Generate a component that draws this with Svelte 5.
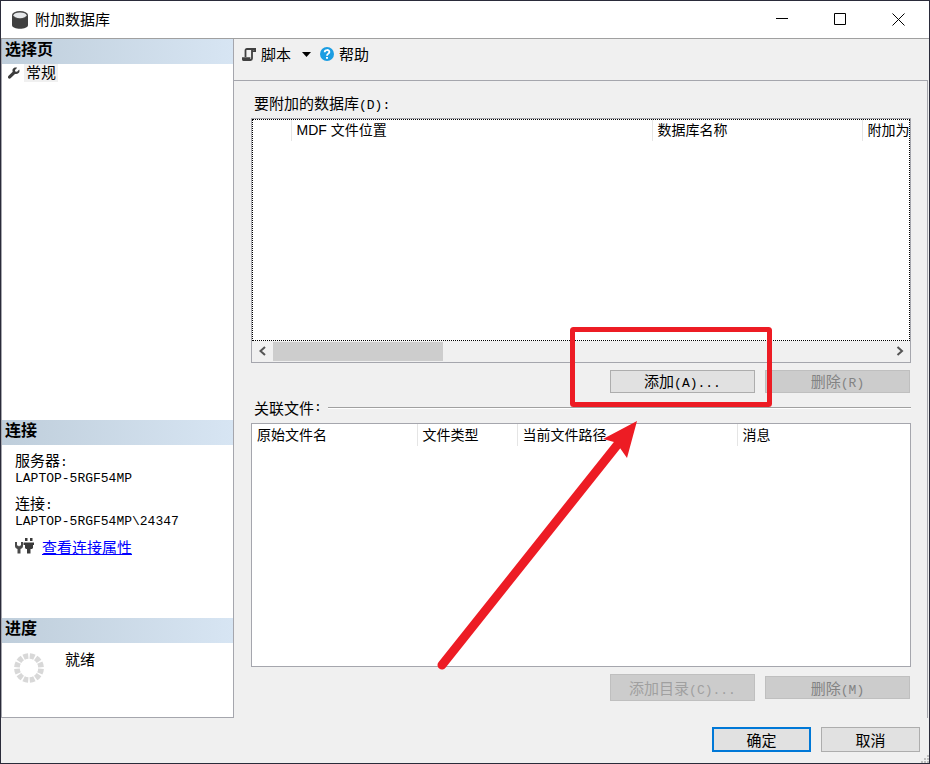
<script lang="ts">
    type Column = {
        title: string;
        width: number;
    };

    const databaseColumns: Column[] = [
        { title: '', width: 39 },
        { title: 'MDF 文件位置', width: 361 },
        { title: '数据库名称', width: 210 },
        { title: '附加为', width: 111 }
    ];

    const fileColumns: Column[] = [
        { title: '原始文件名', width: 165 },
        { title: '文件类型', width: 100 },
        { title: '当前文件路径', width: 220 }
    ];

    const segments = Array.from({ length: 12 }, (_, i) => i * 30 + 15);
</script>

<div class="window" lang="zh-CN">
    <header class="titlebar">
        <svg class="app-icon" width="16" height="18" viewBox="0 0 16 18">
            <path d="M0 4v10c0 5 16 5 16 0V4z" fill="#3f3f3f" />
            <ellipse cx="8" cy="4" rx="8" ry="4" fill="#4a4a4a" />
            <ellipse cx="8" cy="4.3" rx="6.5" ry="2.9" fill="#e6e8ea" />
        </svg>
        <h1>附加数据库</h1>
        <button class="caption" aria-label="最小化">
            <svg width="13" height="13" viewBox="0 0 13 13"><path d="M0 5.5h12" /></svg>
        </button>
        <button class="caption" aria-label="最大化">
            <svg width="13" height="13" viewBox="0 0 13 13"><path d="M.5.5h11v11H.5z" /></svg>
        </button>
        <button class="caption" aria-label="关闭">
            <svg width="13" height="13" viewBox="0 0 13 13"><path d="M.5.5l12 12M12.5.5l-12 12" /></svg>
        </button>
    </header>

    <div class="body">
        <aside>
            <h2>选择页</h2>
            <ul class="pages">
                <li>
                    <svg width="12" height="12" viewBox="0 0 12 12">
                        <path
                            d="M11.2 2.6 9 4.8 7.2 4.6 7 3 9.2.8C7.5 0 5.5.6 4.8 2c-.5 1-.4 1.8-.1 2.7L.6 8.8c-.8.8-.8 1.7-.2 2.4.7.6 1.6.6 2.4-.2L7 6.9c1.1.4 2.6.2 3.6-.8s1.1-2.4.6-3.5z"
                            fill="#3c3c3c"
                        />
                    </svg>
                    <button class="page">常规</button>
                </li>
            </ul>

            <h2>连接</h2>
            <div class="connection">
                <dl>
                    <dt>服务器<span class="latin">:</span></dt>
                    <dd><span class="latin">LAPTOP-5RGF54MP</span></dd>
                    <dt>连接<span class="latin">:</span></dt>
                    <dd><span class="latin">LAPTOP-5RGF54MP\24347</span></dd>
                </dl>
                <div class="properties">
                    <svg width="19" height="17" viewBox="0 0 19 17">
                        <path
                            d="M0 4v4c0 1.5 1 2.5 2.5 3v4.5h3V11C7 10.5 8 9.5 8 8V4H6v3.5H5l-1 1-1-1H2V4z"
                            fill="#4a4a4a"
                        />
                        <path
                            d="M10 0h2.5v3H10zM15 0h2.5v3H15zM8.5 4.5H19V7h-1v3l-1 1h-1.500v4.500H12V11h-1l-1-1V7H8.500z"
                            fill="#3a3a3a"
                        />
                    </svg>
                    <a href="#properties">查看连接属性</a>
                </div>
            </div>

            <h2>进度</h2>
            <div class="progress">
                <svg width="30" height="30" viewBox="-15 -15 30 30">
                    {#each segments as angle}
                        <path
                            d="M-2.9-14.6Q0-15.3 2.9-14.6L1.9-9Q0-9.5-1.9-9z"
                            fill="#d8d8d8"
                            transform="rotate({angle})"
                        />
                    {/each}
                </svg>
                <span>就绪</span>
            </div>
        </aside>

        <main>
            <div class="toolbar">
                <button class="tool">
                    <svg width="14" height="13" viewBox="0 0 14 13">
                        <path
                            d="M3.5 9V2.5Q3.5 1 5 1h8.2v2.2H10.800M10 1.500V10.500Q10 12 8.500 12H1.500Q.8 12 .8 10.200H7.500V12"
                            fill="none"
                            stroke="#404040"
                            stroke-width="1.8"
                        />
                    </svg>
                    脚本
                    <svg class="arrow" width="9" height="5" viewBox="0 0 9 5"><path d="M0 0h9L4.5 5z" /></svg>
                </button>
                <button class="tool">
                    <svg width="14" height="14" viewBox="0 0 14 14">
                        <circle cx="7" cy="7" r="7" fill="#1b9de2" />
                        <path
                            d="M4.7 5.3c0-3 4.7-3 4.7-.2C9.4 6.6 7 6.8 7 8.7"
                            fill="none"
                            stroke="#fff"
                            stroke-width="1.8"
                        />
                        <path d="M6 10h2v1.8H6z" fill="#fff" />
                    </svg>
                    帮助
                </button>
            </div>

            <div class="panel">
                <div class="label" id="databases">要附加的数据库<span class="latin">(D):</span></div>
                <div class="grid">
                    <div class="view focused">
                        <table aria-labelledby="databases">
                            <colgroup>
                                {#each databaseColumns as column}
                                    <col style="width: {column.width}px" />
                                {/each}
                            </colgroup>
                            <thead>
                                <tr>
                                    {#each databaseColumns as column}
                                        <th>{column.title}</th>
                                    {/each}
                                </tr>
                            </thead>
                        </table>
                    </div>
                    <div class="scrollbar">
                        <button aria-label="向左滚动">
                            <svg width="8" height="10" viewBox="0 0 8 10"><path d="M6 1 1.5 5 6 9" /></svg>
                        </button>
                        <div class="track"><div class="thumb"></div></div>
                        <button aria-label="向右滚动">
                            <svg width="8" height="10" viewBox="0 0 8 10"><path d="M1.5 1 6 5 1.5 9" /></svg>
                        </button>
                    </div>
                </div>
                <div class="actions">
                    <div class="marked">
                        <button class="push">添加<span class="latin">(A)...</span></button>
                        <!-- red frame and arrow pointing at the add button -->
                        <svg class="mark" width="342" height="350" viewBox="0 0 342 350">
                            <rect x="142.5" y="9.5" width="197" height="75" rx="1" />
                            <path class="shaft" d="M12 345 188 124" />
                            <path class="head" d="M207 101 173 119 184 122 190 128 197 138z" />
                        </svg>
                    </div>
                    <button class="push" disabled>删除<span class="latin">(R)</span></button>
                </div>

                <div class="label divider" id="files">关联文件<span class="latin">:</span></div>
                <div class="grid">
                    <div class="view">
                        <table class="fluid" aria-labelledby="files">
                            <colgroup>
                                {#each fileColumns as column}
                                    <col style="width: {column.width}px" />
                                {/each}
                                <col />
                            </colgroup>
                            <thead>
                                <tr>
                                    {#each fileColumns as column}
                                        <th>{column.title}</th>
                                    {/each}
                                    <th>消息</th>
                                </tr>
                            </thead>
                        </table>
                    </div>
                </div>
                <div class="actions">
                    <button class="push tall" disabled>添加目录<span class="latin">(C)...</span></button>
                    <button class="push" disabled>删除<span class="latin">(M)</span></button>
                </div>
            </div>
        </main>
    </div>

    <footer>
        <button class="push dialog default">确定</button>
        <button class="push dialog">取消</button>
        <svg class="grip" width="8" height="8" viewBox="0 0 8 8">
            <path d="M6 0h2v2H6zM3 3h2v2H3zM6 3h2v2H6zM0 6h2v2H0zM3 6h2v2H3zM6 6h2v2H6z" fill="#bfbfbf" />
        </svg>
    </footer>
</div>

<style>
    :global(body) {
        margin: 0;
    }

    .window {
        box-sizing: border-box;
        min-height: 100vh;
        display: flex;
        flex-direction: column;
        border: 1px solid #2a2b3a;
        background: #f0f0f0;
        color: #000;
        font: 15px/20px 'Noto Sans CJK SC', sans-serif;
        overflow: hidden;
    }

    button {
        font: inherit;
        color: inherit;
        padding: 0;
        border: 0;
        background: none;
    }

    svg {
        display: block;
        flex: none;
    }

    .latin {
        font-family: 'Liberation Mono', monospace;
        font-size: 13px;
        line-height: 1;
    }

    .titlebar {
        display: flex;
        align-items: center;
        height: 37px;
        padding-right: 2px;
        border-bottom: 1px solid #a0a0a0;
        background: #fff;
    }

    .app-icon {
        margin: 0 7px 0 11px;
    }

    h1 {
        flex: 1;
        margin: 0;
        padding-bottom: 2px;
        font-size: 15px;
        font-weight: 400;
    }

    .caption {
        display: flex;
        justify-content: center;
        align-items: center;
        width: 58px;
        height: 36px;
    }

    .caption path {
        fill: none;
        stroke: #000;
    }

    .body {
        flex: 1;
        display: flex;
    }

    aside {
        box-sizing: border-box;
        flex: none;
        width: 233px;
        display: flex;
        flex-direction: column;
        border: 1px solid #a5a6ad;
        border-top: 0;
        background: #fff;
    }

    h2 {
        margin: 0;
        padding: 0 3px 6px;
        font-size: 16px;
        line-height: 19px;
        background: linear-gradient(to right, #bfcedb, #d7e5f3);
    }

    .pages {
        flex: 1;
        margin: 0;
        padding: 0;
        list-style: none;
    }

    .pages li {
        display: flex;
        align-items: center;
        gap: 4px;
        padding-left: 6px;
    }

    .page {
        padding: 0 2px 2px;
        line-height: 16px;
        background: #f0f0f0;
    }

    .connection {
        height: 166px;
        padding: 7px 12px 0 13px;
    }

    dl {
        margin: 0;
        line-height: 16px;
    }

    dd {
        margin: 0 0 10px;
        line-height: 14px;
    }

    .properties {
        display: flex;
        align-items: center;
        gap: 8px;
        line-height: 16px;
    }

    a {
        color: #00f;
    }

    .progress {
        display: flex;
        gap: 21px;
        height: 64px;
        padding: 10px 12px 0;
        line-height: 12px;
    }

    main {
        flex: 1;
        min-width: 0;
        display: flex;
        flex-direction: column;
    }

    .toolbar {
        display: flex;
        gap: 9px;
        height: 30px;
        padding: 0 8px 11px;
    }

    .tool {
        display: flex;
        align-items: center;
        gap: 5px;
    }

    .arrow {
        margin-left: 6px;
    }

    .panel {
        flex: 1;
        display: flex;
        flex-direction: column;
        margin-right: 1px;
        padding: 12px 16px 17px 17px;
        border: 1px solid #a5a6ad;
        border-width: 1px 1px 0 0;
    }

    .label {
        padding: 0 0 5px 3px;
    }

    .divider {
        display: flex;
        align-items: center;
        margin-top: 5px;
    }

    .divider::after {
        content: '';
        flex: 1;
        margin-left: 6px;
        border-top: 1px solid #a0a0a0;
        border-bottom: 1px solid #fff;
    }

    .grid {
        flex: 1 0 200px;
        box-sizing: border-box;
        display: flex;
        flex-direction: column;
        border: 1px solid #a5a6ad;
        background: #fff;
    }

    .view {
        flex: 1;
        position: relative;
        overflow: hidden;
    }

    .focused::after {
        content: '';
        position: absolute;
        inset: 0;
        border: 1px dotted #000;
        pointer-events: none;
    }

    table {
        width: 0;
        min-width: 721px;
        table-layout: fixed;
        border-collapse: collapse;
        font-family: 'Liberation Sans', 'Noto Sans CJK SC', sans-serif;
        font-size: 14px;
    }

    .fluid {
        width: 100%;
        min-width: 0;
    }

    th {
        height: 22px;
        padding: 0 4px 0 5px;
        border-right: 1px solid #e5e5e5;
        font-weight: 400;
        line-height: 22px;
        text-align: left;
        white-space: nowrap;
    }

    th:last-child {
        border-right: 0;
    }

    .scrollbar {
        display: flex;
        height: 21px;
        background: #f0f0f0;
    }

    .scrollbar button {
        display: flex;
        justify-content: center;
        align-items: center;
        width: 21px;
    }

    .scrollbar path {
        fill: none;
        stroke: #555;
        stroke-width: 2;
    }

    .track {
        flex: 1;
        padding: 1px 0;
    }

    .thumb {
        width: 170px;
        height: 19px;
        background: #cdcdcd;
    }

    .actions {
        display: flex;
        justify-content: flex-end;
        align-items: center;
        gap: 10px;
        padding: 7px 1px 0 0;
    }

    .push {
        box-sizing: border-box;
        display: block;
        width: 145px;
        height: 23px;
        border: 1px solid #adadad;
        background: #e1e1e1;
        line-height: 20px;
    }

    .push:disabled {
        border-color: #bfbfbf;
        background: #ccc;
        color: #838383;
    }

    .push.tall {
        height: 27px;
        color: #a0a0a0;
    }

    .marked {
        position: relative;
        z-index: 1;
    }

    .mark {
        position: absolute;
        left: -180px;
        top: -50px;
        pointer-events: none;
    }

    .mark rect {
        fill: none;
        stroke: #ed1c24;
        stroke-width: 5;
    }

    .shaft {
        stroke: #ed1c24;
        stroke-width: 9;
        stroke-linecap: round;
    }

    .head {
        fill: #ed1c24;
    }

    footer {
        position: relative;
        display: flex;
        justify-content: flex-end;
        gap: 10px;
        padding: 9px 9px 11px;
    }

    .dialog {
        width: 99px;
        height: 25px;
    }

    .default {
        border: 2px solid #0078d7;
    }

    .grip {
        position: absolute;
        right: 0;
        bottom: 0;
    }
</style>
